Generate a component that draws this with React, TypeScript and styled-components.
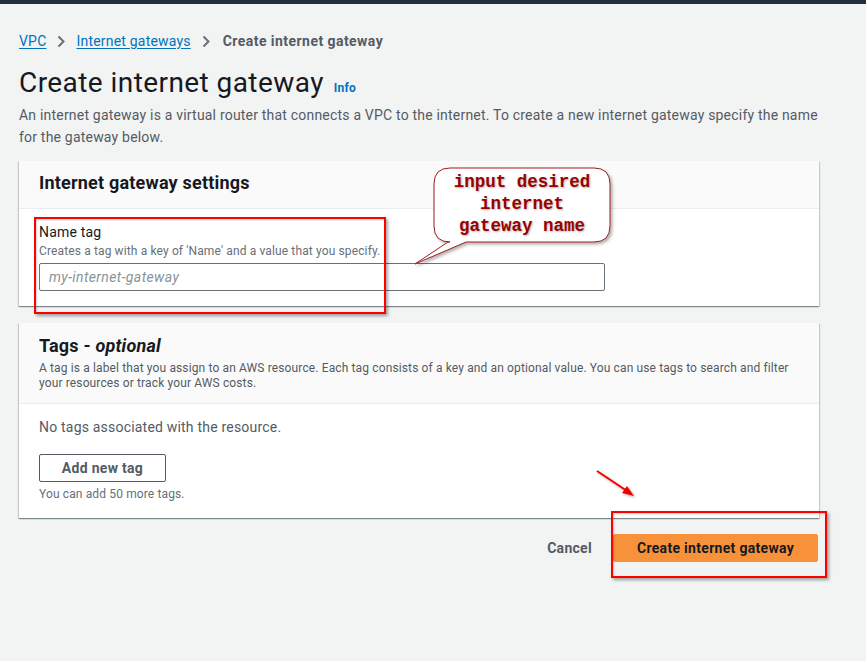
import React from "react";
import styled, { createGlobalStyle } from "styled-components";

const Global = createGlobalStyle`
  html, body { margin: 0; padding: 0; background: #f2f3f3; }
  body { font-family: Roboto, "Noto Sans", Arial, sans-serif; color: #16191f; letter-spacing: 0.2px; }
  * { box-sizing: border-box; }
`;

const Page = styled.div`
  position: relative;
  width: 866px;
  min-height: 661px;
  background: #f2f3f3;
`;

const TopBar = styled.div`
  height: 4px;
  background: #232f3e;
`;

const Main = styled.main`
  width: 800px;
  margin-left: 19px;
  padding-top: 27px;
  display: flex;
  flex-direction: column;
`;

const Breadcrumbs = styled.nav`
  display: flex;
  align-items: center;
  gap: 11px;
  font-size: 14px;
  line-height: 20px;
  letter-spacing: 0.2px;
`;

const Crumb = styled.a`
  color: #0073bb;
  text-decoration: underline;
  text-underline-offset: 2px;
`;

const Current = styled.span`
  color: #545b64;
  font-weight: 700;
  letter-spacing: 0.45px;
  margin-left: 2px;
`;

const TitleRow = styled.div`
  display: flex;
  align-items: baseline;
  gap: 10px;
  margin-top: 14px;
`;

const Title = styled.h1`
  margin: 0;
  font-size: 28px;
  line-height: 36px;
  font-weight: 400;
  letter-spacing: 0.43px;
  color: #16191f;
`;

const InfoLink = styled.span`
  font-size: 12px;
  font-weight: 700;
  color: #0073bb;
`;

const Description = styled.p`
  margin: 3px 0 0;
  font-size: 14px;
  line-height: 22px;
  color: #545b64;
`;

const Card = styled.section<{ $top: number }>`
  margin-top: ${(p) => p.$top}px;
  background: #fff;
  box-shadow: 0 1px 1px 0 rgba(0, 28, 36, 0.3), 1px 1px 1px 0 rgba(0, 28, 36, 0.15),
    -1px 1px 1px 0 rgba(0, 28, 36, 0.15);
`;

const CardHeader = styled.header<{ $pt: number; $pb: number }>`
  background: #fafafa;
  border-bottom: 1px solid #eaeded;
  padding: ${(p) => p.$pt}px 20px ${(p) => p.$pb}px;
`;

const CardTitle = styled.h2`
  margin: 0;
  font-size: 18px;
  line-height: 24px;
  font-weight: 700;
  letter-spacing: 0.2px;
  color: #16191f;
  em { font-weight: 700; }
`;

const CardDesc = styled.p`
  margin: 3px 0 0;
  font-size: 12px;
  line-height: 15px;
  letter-spacing: 0.13px;
  color: #545b64;
`;

const CardBody = styled.div<{ $pt: number; $pb: number }>`
  padding: ${(p) => p.$pt}px 20px ${(p) => p.$pb}px;
  display: flex;
  flex-direction: column;
  align-items: flex-start;
`;

const Label = styled.label`
  font-size: 14px;
  line-height: 20px;
  color: #16191f;
`;

const Hint = styled.div<{ $mt: number }>`
  margin-top: ${(p) => p.$mt}px;
  font-size: 12px;
  line-height: 16px;
  letter-spacing: 0.13px;
  color: #687078;
`;

const Input = styled.input`
  margin-top: 4px;
  width: 566px;
  height: 28px;
  border: 1px solid #687078;
  border-radius: 2px;
  padding: 0 9px;
  font-family: inherit;
  font-size: 14px;
  letter-spacing: 0.4px;
  background: #fff;
  &::placeholder {
    color: #879596;
    font-style: italic;
  }
`;

const EmptyText = styled.div`
  font-size: 14px;
  line-height: 20px;
  color: #545b64;
`;

const Button = styled.button<{ $primary?: boolean }>`
  font-family: inherit;
  font-size: 14px;
  font-weight: 700;
  letter-spacing: 0.3px;
  height: 28px;
  border-radius: 2px;
  cursor: pointer;
  color: ${(p) => (p.$primary ? "#16191f" : "#545b64")};
  background: ${(p) => (p.$primary ? "#f7923a" : "#fff")};
  border: 1px solid ${(p) => (p.$primary ? "#f7923a" : "#545b64")};
  padding: 0;
`;

const AddButton = styled(Button)`
  margin-top: 17px;
  width: 127px;
`;

const Actions = styled.div`
  margin-top: 16px;
  display: flex;
  justify-content: flex-end;
  align-items: center;
  gap: 21px;
  padding-right: 1px;
`;

const LinkButton = styled.button`
  background: none;
  border: none;
  padding: 0;
  font-family: inherit;
  font-size: 14px;
  font-weight: 700;
  letter-spacing: 0.3px;
  color: #545b64;
`;

const PrimaryButton = styled(Button)`
  width: 205px;
`;

/* ---- annotation overlays ---- */
const RedBox = styled.div<{ $x: number; $y: number; $w: number; $h: number }>`
  position: absolute;
  left: ${(p) => p.$x}px;
  top: ${(p) => p.$y}px;
  width: ${(p) => p.$w}px;
  height: ${(p) => p.$h}px;
  border: 2px solid #f00;
  box-shadow: 2px 2px 3px rgba(0, 0, 0, 0.35), inset 1px 1px 2px rgba(0, 0, 0, 0.2);
  pointer-events: none;
`;

const Callout = styled.div`
  position: absolute;
  left: 410px;
  top: 166px;
  width: 206px;
  height: 102px;
  pointer-events: none;
`;

const CalloutShape = styled.svg`
  position: absolute;
  inset: 0;
  overflow: visible;
`;

const CalloutText = styled.div`
  position: absolute;
  left: 24px;
  top: 5px;
  width: 176px;
  text-align: center;
  font-family: "Liberation Mono", "DejaVu Sans Mono", monospace;
  font-weight: 700;
  font-size: 17.5px;
  line-height: 22px;
  letter-spacing: 0;
  color: #9a0000;
  text-shadow: 1px 1px 2px rgba(0, 0, 0, 0.3);
`;

const ArrowSvg = styled.svg`
  position: absolute;
  left: 590px;
  top: 464px;
  width: 52px;
  height: 40px;
  overflow: visible;
`;

const Chevron = () => (
  <svg width="8" height="13" viewBox="0 0 8 13">
    <path d="M1.5 1.5 L6.5 6.5 L1.5 11.5" fill="none" stroke="#687078" strokeWidth="2" />
  </svg>
);

export default function App() {
  return (
    <Page>
      <Global />
      <TopBar />
      <Main>
        <Breadcrumbs>
          <Crumb>VPC</Crumb>
          <Chevron />
          <Crumb>Internet gateways</Crumb>
          <Chevron />
          <Current>Create internet gateway</Current>
        </Breadcrumbs>
        <TitleRow>
          <Title>Create internet gateway</Title>
          <InfoLink>Info</InfoLink>
        </TitleRow>
        <Description>
          An internet gateway is a virtual router that connects a VPC to the internet. To create a new internet gateway
          specify the name for the gateway below.
        </Description>

        <Card $top={13}>
          <CardHeader $pt={10} $pb={13}>
            <CardTitle>Internet gateway settings</CardTitle>
          </CardHeader>
          <CardBody $pt={13} $pb={15}>
            <Label>Name tag</Label>
            <Hint $mt={1}>Creates a tag with a key of 'Name' and a value that you specify.</Hint>
            <Input placeholder="my-internet-gateway" />
          </CardBody>
        </Card>

        <Card $top={17}>
          <CardHeader $pt={11} $pb={12}>
            <CardTitle>
              Tags - <em>optional</em>
            </CardTitle>
            <CardDesc>
              A tag is a label that you assign to an AWS resource. Each tag consists of a key and an optional value. You
              can use tags to search and filter your resources or track your AWS costs.
            </CardDesc>
          </CardHeader>
          <CardBody $pt={13} $pb={16}>
            <EmptyText>No tags associated with the resource.</EmptyText>
            <AddButton>Add new tag</AddButton>
            <Hint $mt={4}>You can add 50 more tags.</Hint>
          </CardBody>
        </Card>

        <Actions>
          <LinkButton>Cancel</LinkButton>
          <PrimaryButton $primary>Create internet gateway</PrimaryButton>
        </Actions>
      </Main>

      <RedBox $x={34} $y={217} $w={352} $h={97} />
      <Callout>
        <CalloutShape width="206" height="102" viewBox="0 0 206 102">
          <defs>
            <filter id="cs" x="-10%" y="-10%" width="130%" height="130%">
              <feDropShadow dx="2" dy="2" stdDeviation="1.5" floodColor="#000" floodOpacity="0.3" />
            </filter>
          </defs>
          <path
            d="M40 2 H184 Q200 2 200 18 V60 Q200 76 184 76 H56 L5 98 L38 76 H40 Q24 76 24 60 V18 Q24 2 40 2 Z"
            fill="#fff"
            stroke="#9a1f1f"
            strokeWidth="1"
            filter="url(#cs)"
          />
        </CalloutShape>
        <CalloutText>
          input desired
          <br />
          internet
          <br />
          gateway name
        </CalloutText>
      </Callout>
      <ArrowSvg viewBox="0 0 52 40">
        <defs>
          <filter id="as" x="-20%" y="-20%" width="150%" height="150%">
            <feDropShadow dx="1.5" dy="1.5" stdDeviation="1" floodColor="#000" floodOpacity="0.3" />
          </filter>
        </defs>
        <g filter="url(#as)">
          <line x1="7" y1="7" x2="40" y2="29" stroke="#e00" strokeWidth="2" />
          <path d="M44 32 L32 29 L37 22 Z" fill="#e00" />
        </g>
      </ArrowSvg>
      <RedBox $x={611} $y={511} $w={216} $h={67} />
    </Page>
  );
}
